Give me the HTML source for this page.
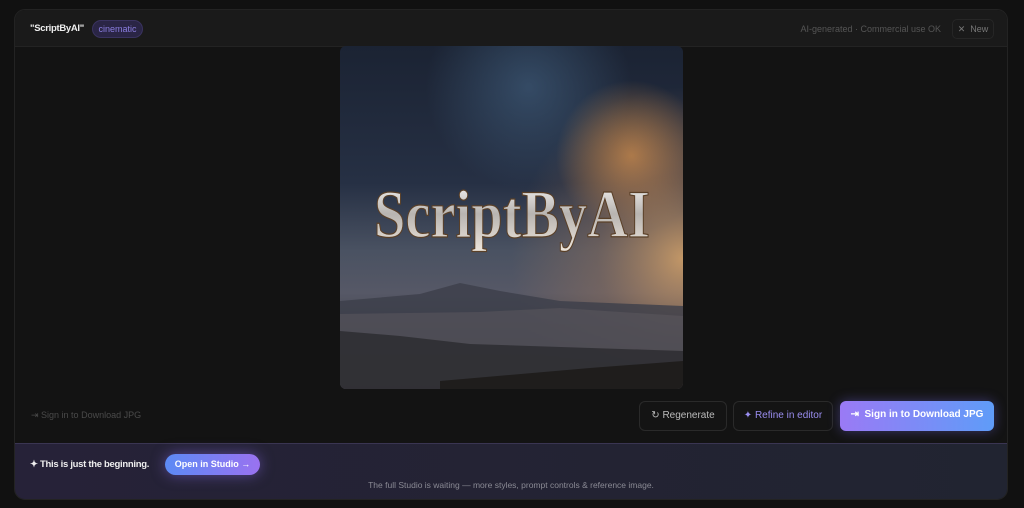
<!DOCTYPE html>
<html><head><meta charset="utf-8"><style>
*{margin:0;padding:0;box-sizing:border-box}
body{width:1024px;height:508px;background:#111111;font-family:"Liberation Sans",sans-serif;overflow:hidden;position:relative}
.card{position:absolute;left:14px;top:9px;width:994px;height:491px;border-radius:11px;background:#131313;border:1px solid #232323;overflow:hidden}
.hdr{position:absolute;left:0;top:0;width:100%;height:37px;background:#1a1a1a;border-bottom:1px solid #232323}
.t{position:absolute;left:15px;top:13px;color:#eee;font-weight:bold;font-size:9.5px;letter-spacing:-0.3px}
.pill{position:absolute;left:77px;top:10px;height:18px;width:51px;border-radius:9px;background:#2a2545;border:1px solid #3a3360;color:#8b7ee0;font-size:9px;text-align:center;line-height:16px}
.r{position:absolute;right:66px;top:14px;color:#555;font-size:9px}
.new{position:absolute;right:13px;top:9px;width:42px;height:20px;border:1px solid #262626;border-radius:5px;color:#777;font-size:9px;line-height:18px;text-align:center}
.img{position:absolute;left:325px;top:36px;width:343px;height:343px;border-radius:6px;overflow:hidden}
.sl{position:absolute;left:16px;top:400px;color:#4a4a4a;font-size:9px}
.btn{position:absolute;top:391px;height:30px;border-radius:6px;border:1px solid #2a2a2a;background:#141414;font-size:10px;line-height:28px;text-align:center}
.foot{position:absolute;left:0;top:433px;width:100%;height:58px;background:linear-gradient(90deg,#262238,#232333 60%,#212431);border-top:1px solid #3a3552}
</style></head><body>
<div class="card">
 <div class="hdr">
  <div class="t">"ScriptByAI"</div>
  <div class="pill">cinematic</div>
  <div class="r">AI-generated · Commercial use OK</div>
  <div class="new">✕&nbsp; New</div>
 </div>
 <div class="img"><svg width="343" height="343" viewBox="0 0 343 343">
  <defs>
   <linearGradient id="sky" x1="0" y1="0" x2="0" y2="1">
    <stop offset="0" stop-color="#1b2333"/><stop offset="0.4" stop-color="#263044"/><stop offset="0.6" stop-color="#4a5262"/><stop offset="0.72" stop-color="#565866"/><stop offset="1" stop-color="#26262a"/>
   </linearGradient>
   <radialGradient id="glow" cx="1" cy="0.62" r="0.5"><stop offset="0" stop-color="#e0a868" stop-opacity="0.8"/><stop offset="0.5" stop-color="#a87a58" stop-opacity="0.35"/><stop offset="1" stop-color="#a87a58" stop-opacity="0"/></radialGradient>
   <radialGradient id="cl" cx="0.85" cy="0.32" r="0.22"><stop offset="0" stop-color="#d08c48" stop-opacity="0.8"/><stop offset="1" stop-color="#d08c48" stop-opacity="0"/></radialGradient>
   <radialGradient id="bl" cx="0.55" cy="0.12" r="0.3"><stop offset="0" stop-color="#3e5a78" stop-opacity="0.7"/><stop offset="1" stop-color="#3e5a78" stop-opacity="0"/></radialGradient>
   <linearGradient id="met" x1="0" y1="0" x2="0" y2="1"><stop offset="0" stop-color="#ffffff"/><stop offset="0.5" stop-color="#b8b4b0"/><stop offset="1" stop-color="#eee6dc"/></linearGradient>
  </defs>
  <rect width="343" height="343" fill="url(#sky)"/>
  <rect width="343" height="343" fill="url(#bl)"/>
  <rect width="343" height="343" fill="url(#cl)"/>
  <rect width="343" height="343" fill="url(#glow)"/>
  <path d="M0 255 L80 248 L120 237 L160 245 L220 255 L343 260 L343 343 L0 343Z" fill="#3c3f4a" opacity="0.8"/>
  <path d="M0 268 L140 266 L220 262 L343 270 L343 343 L0 343Z" fill="#5e5a60" opacity="0.5"/>
  <path d="M0 285 L60 290 L130 298 L343 305 L343 343 L0 343Z" fill="#2a2a2e" opacity="0.8"/>
  <path d="M100 335 L250 322 L343 315 L343 343 L100 343Z" fill="#1f1d1c"/>
  <text x="34" y="191" font-family="Liberation Serif,serif" font-weight="bold" font-size="68" textLength="276" lengthAdjust="spacingAndGlyphs" fill="url(#met)" stroke="#5a4028" stroke-width="1.2">ScriptByAI</text>
 </svg></div>
 <div class="sl">⇥ Sign in to Download JPG</div>
 <div class="btn" style="left:624px;width:88px;color:#bbb">↻ Regenerate</div>
 <div class="btn" style="left:718px;width:100px;color:#9a8ef0">✦ Refine in editor</div>
 <div class="btn" style="left:825px;width:154px;border:none;background:linear-gradient(90deg,#9a7af5,#5f9cf8);color:#fff;font-weight:bold;box-shadow:0 0 12px rgba(120,110,240,.4)">⇥&nbsp; Sign in to Download JPG</div>
 <div class="foot">
  <div style="position:absolute;left:15px;top:15px;color:#eee;font-weight:bold;font-size:9.5px;letter-spacing:-0.3px">✦ This is just the beginning.</div>
  <div style="position:absolute;left:150px;top:10px;width:95px;height:21px;border-radius:11px;background:linear-gradient(90deg,#5c8af5,#9a72f0);color:#fff;font-weight:bold;font-size:9px;line-height:21px;text-align:center;box-shadow:0 0 14px rgba(140,110,240,.5)">Open in Studio →</div>
  <div style="position:absolute;left:0;width:100%;top:36px;text-align:center;color:#8a8a94;font-size:8.5px">The full Studio is waiting — more styles, prompt controls &amp; reference image.</div>
 </div>
</div>
</body></html>
